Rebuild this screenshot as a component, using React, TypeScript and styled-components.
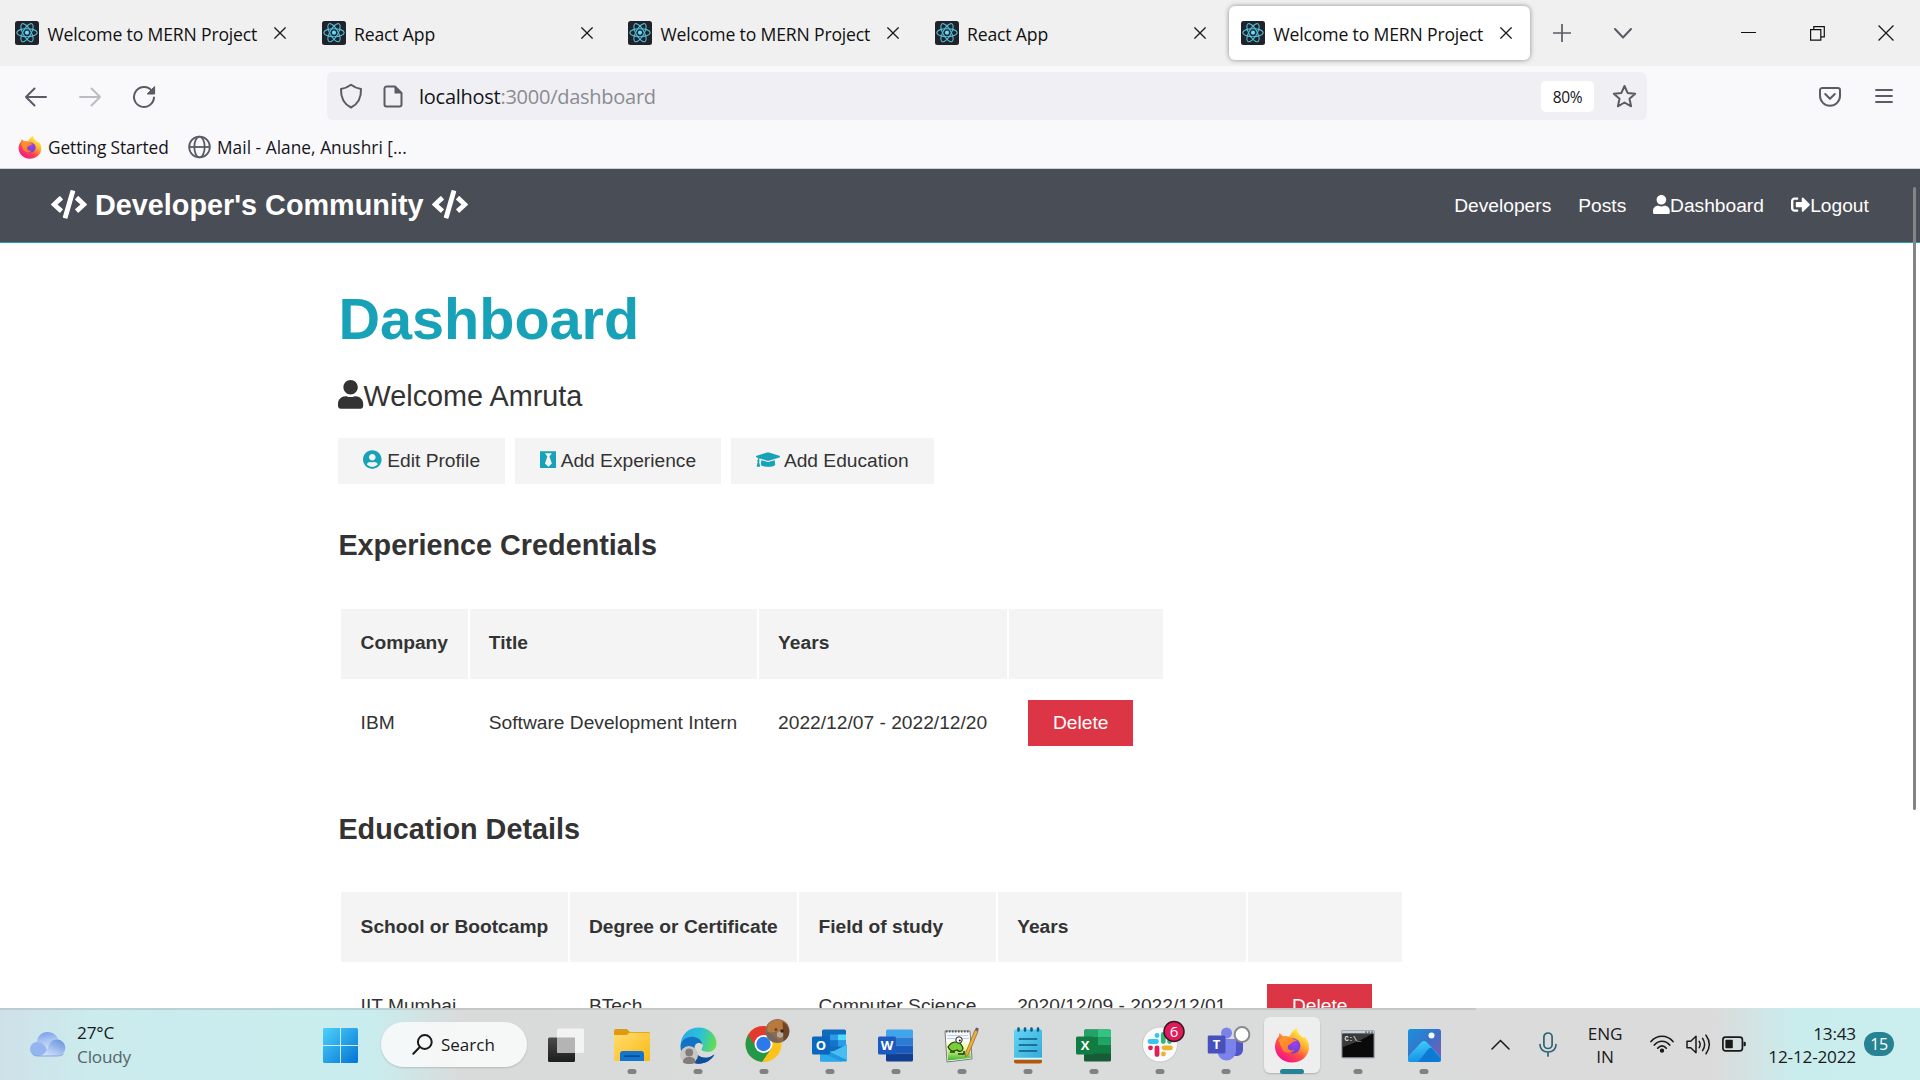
import React from "react";
import styled, { createGlobalStyle } from "styled-components";
import { FaBlackTie, FaCode, FaGraduationCap, FaSignOutAlt, FaUser, FaUserCircle } from "react-icons/fa";

const GlobalStyle = createGlobalStyle`
  html { font-size: 19.2px; }
  * { box-sizing: border-box; margin: 0; padding: 0; }
  body { background: #fff; overflow: hidden; }
`;

const uiFont = `"Open Sans", "Noto Sans", sans-serif`;

const Screen = styled.div`
  width: 1920px;
  height: 1080px;
  display: flex;
  flex-direction: column;
  overflow: hidden;
  background: #fff;
`;

/* ---------- Browser chrome ---------- */

const TabStrip = styled.div`
  height: 66px;
  flex: none;
  display: flex;
  align-items: center;
  padding-left: 3px;
  background: #f0f0f0;
`;

const Tab = styled.div<{ $active?: boolean }>`
  width: 301px;
  height: 54px;
  flex: none;
  display: flex;
  align-items: center;
  margin-right: 5.5px;
  padding: 0 18px 0 12px;
  border-radius: 6px;
  background: ${(p) => (p.$active ? "#fff" : "transparent")};
  box-shadow: ${(p) => (p.$active ? "0 0 5px rgba(0,0,0,0.42)" : "none")};
`;

const TabTitle = styled.span`
  flex: 1;
  margin-left: 8.5px;
  padding-top: 1px;
  font: 17.6px ${uiFont};
  letter-spacing: -0.16px;
  color: #111;
  white-space: nowrap;
`;

const StripButton = styled.span<{ $width: number; $push?: boolean }>`
  width: ${(p) => p.$width}px;
  height: 54px;
  flex: none;
  display: flex;
  align-items: center;
  justify-content: center;
  margin-left: ${(p) => (p.$push ? "auto" : 0)};
`;

const NavBar = styled.div`
  height: 61px;
  flex: none;
  display: flex;
  align-items: center;
  padding: 0 27px 0 9px;
  background: #f9f9fb;
`;

const NavButtons = styled.div`
  width: 318px;
  display: flex;
  align-items: center;
  padding-top: 1px;
`;

const NavButton = styled.span`
  width: 54px;
  display: flex;
  justify-content: center;
`;

const UrlBar = styled.div`
  width: 1320px;
  height: 48px;
  margin-top: -1px;
  display: flex;
  align-items: center;
  padding: 0 10px 0 12px;
  border-radius: 6px;
  background: #f0f0f4;
`;

const PageIcon = styled.span`
  display: flex;
  margin-left: 20px;
`;

const UrlText = styled.span`
  flex: 1;
  margin-left: 16px;
  padding-top: 1px;
  font: 20px ${uiFont};
  letter-spacing: -0.26px;
  color: #8b8b91;
  b { font-weight: 400; color: #15141a; }
`;

const ZoomPill = styled.span`
  width: 53px;
  height: 31px;
  margin-right: 18px;
  border-radius: 5px;
  background: #fff;
  font: 15.5px/32px ${uiFont};
  letter-spacing: -0.3px;
  text-align: center;
  color: #15141a;
`;

const NavEnd = styled.div`
  flex: 1;
  display: flex;
  justify-content: flex-end;
  align-items: center;
  gap: 34px;
`;

const Bookmarks = styled.div`
  height: 42px;
  flex: none;
  display: flex;
  align-items: center;
  padding: 0 0 1px 18px;
  border-bottom: 1px solid #cfd0d0;
  background: #f9f9fb;
`;

const Bookmark = styled.span<{ $width: number; $spacing: number }>`
  width: ${(p) => p.$width}px;
  display: flex;
  align-items: center;
  gap: 6px;
  font: 17.3px ${uiFont};
  letter-spacing: ${(p) => p.$spacing}px;
  color: #15141a;
  white-space: nowrap;
`;

/* ---------- Web page ---------- */

const Page = styled.main`
  position: relative;
  flex: 1;
  min-height: 0;
  overflow: hidden;
  font: 1rem/1.6 "Liberation Sans", Arial, sans-serif;
  color: #333;
`;

const SiteNav = styled.nav`
  height: 74px;
  display: flex;
  justify-content: space-between;
  align-items: center;
  padding: 0 51.2px 0 51px;
  border-bottom: 1px solid #17a2b8;
  background: #494d55;
  color: #fff;
`;

const Glyph = styled.span<{ $color?: string; $width: number }>`
  color: ${(p) => p.$color || "inherit"};
  svg { width: ${(p) => p.$width}em; height: 1em; vertical-align: -0.125em; }
`;

const Brand = styled.h1`
  font-size: 1.5rem;
  line-height: 1.6;
`;

const Links = styled.div`
  display: flex;
  gap: 27px;
  padding-top: 1px;
`;

const ScrollThumb = styled.div`
  position: absolute;
  top: 18px;
  right: 4px;
  width: 3px;
  height: 623px;
  border-radius: 2px;
  background: #858587;
`;

const Container = styled.section`
  width: 1320px;
  margin: 0 auto;
  padding: 42.2px 38.4px 0;
`;

const Title = styled.h1`
  font-size: 3rem;
  line-height: 1.2;
  margin-bottom: 18.4px;
  color: #17a2b8;
`;

const Lead = styled.p`
  font-size: 1.5rem;
  margin-bottom: 1rem;
`;

const ButtonRow = styled.div`
  display: flex;
`;

const Btn = styled.a<{ $danger?: boolean }>`
  display: inline-block;
  vertical-align: top;
  padding: 0.4rem 1.3rem;
  margin-right: 0.5rem;
  background: ${(p) => (p.$danger ? "#dc3545" : "#f4f4f4")};
  color: ${(p) => (p.$danger ? "#fff" : "#333")};
`;

const SubTitle = styled.h2`
  margin: 2rem 0;
  font-size: 1.5rem;
`;

const Table = styled.table`
  margin: 0.4px 0 0.6px 1px;
  border-collapse: separate;
  border-spacing: 2px;
  th, td { padding: 19.2px 19.6px 19.6px 19.2px; text-align: left; white-space: nowrap; }
  th { padding-top: 19.6px; background: #f4f4f4; }
`;

/* ---------- Taskbar ---------- */

const Taskbar = styled.footer`
  height: 72px;
  flex: none;
  display: flex;
  align-items: center;
  background:
    linear-gradient(rgba(150, 150, 150, 0.3), rgba(150, 150, 150, 0.3)) 0 0 / 1476px 2px no-repeat,
    linear-gradient(90deg, #cfe1e8 0, #cbebed 90px, #c9edee 370px, #d9dbdb 460px, #dbdbdb 1715px, #c9eced 1795px, #cbeeef 1920px);
`;

const Weather = styled.div`
  width: 306px;
  display: flex;
  align-items: center;
  gap: 10px;
  padding-left: 29px;
`;

const TwoLines = styled.div<{ $width?: number; $align?: string; $lead?: number }>`
  width: ${(p) => (p.$width ? `${p.$width}px` : "auto")};
  padding-top: 2px;
  font: 17.2px/${(p) => p.$lead || 24}px ${uiFont};
  letter-spacing: -0.2px;
  text-align: ${(p) => p.$align || "left"};
  color: #1a1a1a;
  white-space: nowrap;
`;

const Muted = styled.div`
  color: #56666a;
`;

const StartSlot = styled.div`
  width: 75px;
  display: flex;
  padding: 2px 0 0 17px;
`;

const SearchPill = styled.div`
  width: 146px;
  height: 45px;
  display: flex;
  align-items: center;
  gap: 8px;
  margin: 1px 6px 0 0;
  padding-left: 31px;
  border-radius: 23px;
  background: rgba(248, 250, 250, 0.9);
  box-shadow: 0 1px 2px rgba(0, 0, 0, 0.16);
  font: 17px ${uiFont};
  letter-spacing: 0;
  color: #1a1a1a;
`;

const AppSlot = styled.div`
  position: relative;
  width: 66px;
  height: 72px;
  display: flex;
  align-items: center;
  justify-content: center;
  padding-top: 2px;
`;

const ActiveTile = styled.div`
  position: absolute;
  inset: 9px 5px 7px;
  border-radius: 6px;
  background: #eeeeee;
  box-shadow: 0 1px 2px rgba(0, 0, 0, 0.2);
`;

const Art = styled.span<{ $shift?: string }>`
  position: relative;
  display: flex;
  transform: ${(p) => p.$shift || "none"};
`;

const RunningDot = styled.div<{ $active?: boolean }>`
  position: absolute;
  bottom: 6px;
  left: 50%;
  transform: translateX(-50%);
  width: ${(p) => (p.$active ? 24 : 9)}px;
  height: 5px;
  border-radius: 3px;
  background: ${(p) => (p.$active ? "#268393" : "#818181")};
`;

const Tray = styled.div`
  flex: 1;
  display: flex;
  align-items: center;
  padding-left: 34px;
`;

const TraySlot = styled.span<{ $width: number; $indent?: number }>`
  width: ${(p) => p.$width}px;
  display: flex;
  align-items: center;
  padding-left: ${(p) => p.$indent || 0}px;
`;

const CountBadge = styled.span`
  width: 30px;
  height: 24px;
  margin-left: 8px;
  border-radius: 12px;
  background: #268393;
  color: #fff;
  font: 16px/24px ${uiFont};
  letter-spacing: -0.3px;
  text-align: center;
`;

/* ---------- Drawings ---------- */

const ReactFavicon = () => (
  <svg width="24" height="24" viewBox="0 0 24 24">
    <rect width="24" height="24" rx="2.5" fill="#20232a" />
    <g fill="none" stroke="#53c1de" strokeWidth="1.1">
      <ellipse cx="12" cy="11.7" rx="10.2" ry="4" />
      <ellipse cx="12" cy="11.7" rx="10.2" ry="4" transform="rotate(60 12 11.7)" />
      <ellipse cx="12" cy="11.7" rx="10.2" ry="4" transform="rotate(120 12 11.7)" />
    </g>
    <circle cx="12" cy="11.7" r="2.1" fill="#61dafb" />
  </svg>
);

const Cross = ({ size, color = "#1b1b1b", weight = 1.3 }: { size: number; color?: string; weight?: number }) => (
  <svg width={size} height={size} viewBox="0 0 12 12" fill="none" stroke={color} strokeWidth={(weight * 12) / size}>
    <path d="M.4.4l11.2 11.2M11.6.4L.4 11.6" />
  </svg>
);

const Arrow = ({ flip, color }: { flip?: boolean; color: string }) => (
  <svg width="22" height="20" viewBox="0 0 22 20" fill="none" stroke={color} strokeWidth="2" strokeLinecap="round" strokeLinejoin="round">
    <path d={flip ? "M1 10h20M12.500 1.500L21 10l-8.500 8.500" : "M21 10H1M9.500 1.500L1 10l8.500 8.500"} />
  </svg>
);

const Reload = () => (
  <svg width="24" height="24" viewBox="0 0 24 24">
    <path d="M20.200 6.200A10 10 0 1 0 22 12.400" fill="none" stroke="#5b5b66" strokeWidth="2" strokeLinecap="round" />
    <path d="M22.600 1.600v7.400h-7.400z" fill="#5b5b66" stroke="#5b5b66" strokeLinejoin="round" />
  </svg>
);

const Shield = () => (
  <svg width="24" height="26" viewBox="0 0 24 26" fill="none" stroke="#5b5b66" strokeWidth="2" strokeLinejoin="round">
    <path d="M12 1.800c3 2.400 6.300 3.600 10 4.300C22.300 14.500 19 21 12 24.500 5 21 1.700 14.500 2 6.100 5.700 5.400 9 4.200 12 1.800z" />
  </svg>
);

const FileIcon = () => (
  <svg width="20" height="23" viewBox="0 0 20 23">
    <path d="M3.500 1.500H12l6.500 6.500v11.500a2 2 0 0 1-2 2h-13a2 2 0 0 1-2-2v-16a2 2 0 0 1 2-2z" fill="none" stroke="#5b5b66" strokeWidth="2" />
    <path d="M11.500 1.500v7h7z" fill="#5b5b66" />
  </svg>
);

const Star = () => (
  <svg width="25" height="25" viewBox="0 0 25 25" fill="none" stroke="#5b5b66" strokeWidth="2" strokeLinejoin="round">
    <path d="M12.500 2l3.100 6.900 7.600.8-5.700 5.100 1.600 7.500-6.600-3.800-6.600 3.800 1.600-7.500L1.800 9.700l7.600-.8z" />
  </svg>
);

const Pocket = () => (
  <svg width="22" height="20" viewBox="0 0 22 20" fill="none" stroke="#5b5b66" strokeWidth="2" strokeLinecap="round" strokeLinejoin="round">
    <path d="M3.200 1h15.600A2.200 2.200 0 0 1 21 3.200v5.600a10 10 0 0 1-20 0V3.200A2.200 2.200 0 0 1 3.200 1z" />
    <path d="M6.200 7l4.800 4.700L15.800 7" />
  </svg>
);

const Menu = () => (
  <svg width="18" height="18" viewBox="0 0 18 18" stroke="#5b5b66" strokeWidth="1.800" strokeLinecap="round">
    <path d="M1 2h16M1 8h16M1 14h16" />
  </svg>
);

const Globe = () => (
  <svg width="23" height="24" viewBox="0 0 24 24" fill="none" stroke="#5b5b66" strokeWidth="1.900">
    <circle cx="12" cy="12" r="10.800" />
    <ellipse cx="12" cy="12" rx="5.400" ry="10.800" />
    <path d="M1.200 12h21.600" />
  </svg>
);

const Firefox = ({ size, id }: { size: number; id: string }) => (
  <svg width={size} height={size} viewBox="0 0 36 36">
    <defs>
      <linearGradient id={`${id}a`} x1=".85" y1=".05" x2=".25" y2=".95">
        <stop offset=".1" stopColor="#fff04a" />
        <stop offset=".38" stopColor="#ffb02e" />
        <stop offset=".65" stopColor="#ff4f45" />
        <stop offset="1" stopColor="#f4128b" />
      </linearGradient>
      <radialGradient id={`${id}b`} cx=".6" cy=".35" r=".7">
        <stop offset="0" stopColor="#a63df0" />
        <stop offset="1" stopColor="#5b47cf" />
      </radialGradient>
      <linearGradient id={`${id}c`} x1="0" y1="0" x2="1" y2="1">
        <stop offset="0" stopColor="#ffa22a" />
        <stop offset="1" stopColor="#ff6634" />
      </linearGradient>
    </defs>
    <path
      d="M23.500.500c-1 3.400.3 5.400 3.200 8.200 1.200.7 2.500 1.500 3.300 2.600l.6-1.600c3.300 3.300 4.600 7.100 4.400 11.300C34.500 29.500 27 35.500 18 35.500S1 28.700 1 19.700c0-4 1.500-7.700 3.800-10.200L5.500 6l3.700 3.300c2-.5 4.200-.3 6.100.5 1.500-3.900 4.500-7.300 8.200-9.300z"
      fill={`url(#${id}a)`}
    />
    <circle cx="18.800" cy="18.800" r="7.600" fill={`url(#${id}b)`} />
    <path
      d="M4.500 13.500c2.300-3 5.200-4.200 8.700-3.800 2.500.2 4.700 1.200 6 2.600l4 .7c-1.800 1.500-4.700 1.600-6 3.300-1.700 1.500-3.500 1.600-3.400 4 .3 3 3.800 4.100 6.900 2.500-2.500 4-8.600 4-11.300 1C6.600 20.500 7 17 4.500 13.500z"
      fill={`url(#${id}c)`}
    />
  </svg>
);

const Cloud = () => (
  <svg width="38" height="26" viewBox="0 0 38 26">
    <defs>
      <linearGradient id="cloud" x1="0" y1="0" x2=".2" y2="1">
        <stop offset="0" stopColor="#6f9bea" />
        <stop offset=".5" stopColor="#a9c3f2" />
        <stop offset="1" stopColor="#d3e1fa" />
      </linearGradient>
      <linearGradient id="cloudFront" x1="1" y1="0" x2=".2" y2="1">
        <stop offset="0" stopColor="#5f8ddd" />
        <stop offset="1" stopColor="#dbe6fb" />
      </linearGradient>
    </defs>
    <path d="M8 12C8 5 12.500 1 18.500 1S29 5 29.500 10v10H8z" fill="url(#cloud)" />
    <path d="M8 11c5 0 8 3 10 8l-4 6H8a7 7 0 0 1 0-14z" fill="#95b5ee" />
    <path d="M28 8.500a8.300 8.300 0 0 1 0 16.600H10c4-1 7-3 9-8.100 1-5 4-8.500 9-8.500z" fill="url(#cloudFront)" />
    <path d="M3.500 23c2 1.800 4 2 6 2h18c3 0 5-.5 7-2" fill="none" stroke="#7ea5e8" strokeWidth="1" />
  </svg>
);

const WindowsLogo = () => (
  <svg width="35" height="35" viewBox="0 0 35 35">
    <defs>
      <linearGradient id="win" x1="0" y1="0" x2="1" y2="1">
        <stop offset="0" stopColor="#4ed2fb" />
        <stop offset="1" stopColor="#0273d4" />
      </linearGradient>
    </defs>
    <path d="M1.500 0h15.500v17H0V1.500Q0 0 1.500 0zM18 0h15.500Q35 0 35 1.500V17H18zM0 18h17v17H1.500Q0 35 0 33.500zM18 18h17v15.500q0 1.500-1.500 1.500H18z" fill="url(#win)" />
  </svg>
);

const Magnifier = () => (
  <svg width="21" height="21" viewBox="0 0 21 21" fill="none" stroke="#1a1a1a" strokeWidth="2" strokeLinecap="round">
    <circle cx="12.800" cy="8" r="6.900" />
    <path d="M7.800 13L1.300 19.700" />
  </svg>
);

const TaskView = () => (
  <svg width="36" height="36" viewBox="0 0 36 36">
    <defs>
      <linearGradient id="tv" x1="0" y1="0" x2="0" y2="1">
        <stop offset="0" stopColor="#4b4b4b" />
        <stop offset="1" stopColor="#1c1c1c" />
      </linearGradient>
    </defs>
    <rect y="10.500" width="27" height="24.500" rx="1.500" fill="url(#tv)" />
    <rect x="9" y="1.500" width="27" height="24.500" rx="1.500" fill="#f4f4f4" opacity=".95" />
    <path d="M9 10.500h18V26H10.500L9 24.500z" fill="#b4b4b4" />
  </svg>
);

const Folder = () => (
  <svg width="36" height="34" viewBox="0 0 36 34">
    <defs>
      <linearGradient id="fold" x1="0" y1="0" x2="1" y2="1">
        <stop offset="0" stopColor="#ffdd70" />
        <stop offset="1" stopColor="#f9b914" />
      </linearGradient>
    </defs>
    <path d="M0 3a2 2 0 0 1 2-2h9.500c1 0 2 .500 2.700 1.200L16 4h18.500A1.500 1.500 0 0 1 36 5.500V12H0z" fill="#de9a10" />
    <path d="M0 7h12c1.500 0 2.500-2.300 4-2.300h18.500A1.500 1.500 0 0 1 36 6.200v25.300a1.500 1.500 0 0 1-1.500 1.500h-33A1.500 1.500 0 0 1 0 31.500z" fill="url(#fold)" />
    <path d="M6 33v-7a3 3 0 0 1 3-3h18a3 3 0 0 1 3 3v7z" fill="#1275d0" />
    <path d="M11 28.200h14" stroke="#0c4a93" strokeWidth="1.700" strokeLinecap="round" />
  </svg>
);

const Edge = () => (
  <svg width="37" height="37" viewBox="0 0 37 37">
    <defs>
      <linearGradient id="edgeTop" x1="0" y1=".3" x2="1" y2=".5">
        <stop offset="0" stopColor="#2aa9ea" />
        <stop offset=".55" stopColor="#2cc2d4" />
        <stop offset="1" stopColor="#63de4d" />
      </linearGradient>
    </defs>
    <path d="M.700 17C1.500 7 9 .500 18.500.500 29 .500 36.500 8 36.500 16.500c0 5-3.600 8.300-8.500 8.300-4 0-6.500-1-6.500-2.500 0-1 1.300-1.700 1.300-3.800C22.800 14 18 10 12 10 6.500 10 2.500 13 .700 17z" fill="url(#edgeTop)" />
    <path d="M.500 18.500C1 12.500 7 9.500 12.500 9.700c5.500.2 9.500 3.500 10 7.800-3.500-3-8-1.500-8 3.500 0 7 7 11 13.500 9.500 2.800-.6 4.500-2 6.500-3C31.500 33 25.500 36.700 18.500 36.700 8 36.700 0 28.500.500 18.500z" fill="#1273c4" />
    <path d="M14.500 22c1 6.500 7.500 9.500 13.500 8.500 2.700-.5 4.500-2 6.500-3-3 5.500-9 9.200-16 9.200-4 0-6-2-7-4.500z" fill="#134e9b" />
    <circle cx="9" cy="28" r="9" fill="#c9c6c4" />
    <circle cx="9.200" cy="25.500" r="3.900" fill="#817d7a" />
    <path d="M3 35.500c0-4 2.400-5.500 6.200-5.500s6.200 1.500 6.200 5.500c-3 2-9 2-12.400 0z" fill="#817d7a" />
  </svg>
);

const Chrome = () => (
  <svg width="46" height="44" viewBox="0 0 46 44">
    <g transform="translate(1 7)">
      <circle cx="18" cy="18" r="18" fill="#fdc31b" />
      <path d="M18 18L2.400 9A18 18 0 0 0 16.500 36L25.800 22.500z" fill="#23974a" />
      <path d="M2.400 9A18 18 0 0 1 33.600 9H18L10 20.500z" fill="#e13b2e" />
      <circle cx="18" cy="18" r="9" fill="#fff" />
      <circle cx="18" cy="18" r="7.200" fill="#2b79ea" />
    </g>
    <circle cx="33" cy="12" r="12" fill="#8a6a50" />
    <path d="M23 7c3-8 16-8 18-2l-3 6-8 2-7 1z" fill="#b8793f" />
    <path d="M21.300 13c5-1 7 4 13 9-6 3-12-1-13-9z" fill="#75665b" />
    <path d="M38 2.500c5 3 7.500 8 6.500 12-1 4-3 6-5.500 7.500z" fill="#6e4427" />
    <circle cx="35.500" cy="15.500" r="3.200" fill="#b9a99c" />
    <circle cx="31.500" cy="10.500" r="1.500" fill="#6b4326" />
    <circle cx="37.500" cy="12" r="1.700" fill="#3a251a" />
  </svg>
);

const BadgeLetter = ({ x, y, color, letter }: { x: number; y: number; color: string; letter: string }) => (
  <g>
    <rect x={x} y={y} width="18" height="18" rx="1.500" fill={color} />
    <text x={x + 9} y={y + 13.600} fill="#fff" textAnchor="middle" fontFamily='"Open Sans", sans-serif' fontWeight="700" fontSize="13">
      {letter}
    </text>
  </g>
);

const Outlook = () => (
  <svg width="36" height="33" viewBox="0 0 36 33">
    <rect x="10" y=".500" width="24" height="22" rx="1.500" fill="#0f6cbd" />
    <path d="M18 5.500h8v6h-8z" fill="#2f9be8" />
    <path d="M26 5.500h8v6h-8z" fill="#50d9ff" />
    <path d="M18 11.500h8v6h-8z" fill="#1575c9" />
    <path d="M26 11.500h8v6h-8z" fill="#2b9ce9" />
    <path d="M8 15l14 9 13-8.500V31a1.500 1.500 0 0 1-1.500 1.500h-24A1.500 1.500 0 0 1 8 31z" fill="#2197e0" />
    <path d="M35 15.500V31L19 23.500z" fill="#49bdf3" />
    <path d="M8 23l22 9.500H9.500A1.500 1.500 0 0 1 8 31z" fill="#2aa9ec" />
    <BadgeLetter x={0} y={7.500} color="#0b66be" letter="O" />
  </svg>
);

const Word = () => (
  <svg width="36" height="33" viewBox="0 0 36 33">
    <path d="M9.500.500h24A1.500 1.500 0 0 1 35 2v6.500H8V2A1.500 1.500 0 0 1 9.500.500z" fill="#41a5ee" />
    <path d="M8 8.500h27v8H8z" fill="#2b7cd3" />
    <path d="M8 16.500h27v8H8z" fill="#185abd" />
    <path d="M8 24.500h27V31a1.500 1.500 0 0 1-1.500 1.500h-24A1.500 1.500 0 0 1 8 31z" fill="#103f91" />
    <BadgeLetter x={0} y={7.500} color="#1c5abf" letter="W" />
  </svg>
);

const Excel = () => (
  <svg width="36" height="33" viewBox="0 0 36 33">
    <rect x="8" y=".500" width="27" height="32" rx="1.500" fill="#185c37" />
    <path d="M9.500.500H22v8H8V2A1.500 1.500 0 0 1 9.500.500z" fill="#21a366" />
    <path d="M22 .500h11.500A1.500 1.500 0 0 1 35 2v6.500H22z" fill="#33c481" />
    <path d="M8 8.500h14v16H8z" fill="#107c41" />
    <path d="M22 8.500h13v8H22z" fill="#21a366" />
    <path d="M22 16.500h13v8H22z" fill="#107c41" />
    <BadgeLetter x={0} y={7.500} color="#107c41" letter="X" />
  </svg>
);

const NotepadPlus = () => (
  <svg width="36" height="36" viewBox="0 0 36 36">
    <defs>
      <linearGradient id="npp" x1="0" y1="0" x2="0" y2="1">
        <stop offset="0" stopColor="#fff" />
        <stop offset=".4" stopColor="#f2fa9a" />
        <stop offset="1" stopColor="#3cb42a" />
      </linearGradient>
    </defs>
    <path d="M1 4h25l2 28-25 3z" fill="#f7f7f7" stroke="#7c7c7c" strokeWidth="1" />
    <path d="M2.500 13h23l1.300 18L4 33.500z" fill="url(#npp)" />
    <path d="M3 8.500h21M3 11.500h22" stroke="#b5d3ea" strokeWidth="1" />
    <path d="M2 4.500h23" stroke="#555" strokeWidth="2" strokeDasharray="1.500 1.500" />
    <path d="M4 20c4-7 12-6 14-1 3 4-2 7-5 4-4 2-7 1-9-3z" fill="#79cf33" stroke="#1f3d13" strokeWidth="1.200" />
    <circle cx="15" cy="13" r="3.200" fill="#fff" stroke="#222" />
    <circle cx="15.800" cy="13.500" r="1" fill="#111" />
    <path d="M6 25h5m3 2h6v-3" stroke="#16400f" strokeWidth="1.500" fill="none" />
    <path d="M31 3l3 1.300L24.500 27l-3 3 .3-4.500z" fill="#eeb13c" stroke="#8c5a22" strokeWidth=".7" />
    <path d="M31 3l1-2.500 2.800 1L34 4.300z" fill="#5b6070" />
  </svg>
);

const Notepad = () => (
  <svg width="28" height="37" viewBox="0 0 28 37">
    <defs>
      <linearGradient id="note" x1="0" y1="0" x2="1" y2="1">
        <stop offset="0" stopColor="#62d5f5" />
        <stop offset="1" stopColor="#35a9d6" />
      </linearGradient>
    </defs>
    <path d="M0 33h28v1.500a2 2 0 0 1-2 2H2a2 2 0 0 1-2-2z" fill="#b6560d" />
    <rect y="2.500" width="28" height="30" rx="1.500" fill="url(#note)" />
    <path d="M0 31.500h28" stroke="#e6f6fb" strokeWidth="1.500" />
    <path d="M4.500 1.500v2M11 1.500v2M17.500 1.500v2M24 1.500v2" stroke="#0b5c86" strokeWidth="2.600" strokeLinecap="round" />
    <path d="M5.500 12h17M5.500 18h17M5.500 24h17" stroke="#0a5a84" strokeWidth="1.700" strokeLinecap="round" />
  </svg>
);

const Slack = () => (
  <svg width="44" height="44" viewBox="0 0 44 44">
    <circle cx="18.500" cy="25.500" r="17.500" fill="#fbfbfb" stroke="#c0c0c0" strokeWidth=".8" />
    <g strokeWidth="4.800" strokeLinecap="round">
      <path d="M8.500 22.500h6.500M15.500 16.500v0" stroke="#36c5f0" />
      <path d="M21.800 15.500v7M28 22.500v0" stroke="#2eb67d" />
      <path d="M22.500 28.800h6.500M22 35v0" stroke="#ecb22e" />
      <path d="M15.500 29v6.500M9 28.800v0" stroke="#e01e5a" />
    </g>
    <circle cx="32.500" cy="12.500" r="10" fill="#df1b59" stroke="#3d1426" strokeWidth="1.500" />
    <text x="32.500" y="17.900" textAnchor="middle" fill="#fff" fontFamily='"Open Sans", sans-serif' fontSize="15">
      6
    </text>
  </svg>
);

const Teams = () => (
  <svg width="44" height="37" viewBox="0 0 44 37">
    <path d="M26 13h9.500v10.500c0 4-3 6.500-6.500 6.500h-3z" fill="#4f57c5" />
    <circle cx="19" cy="7" r="5.500" fill="#7b83eb" />
    <path d="M10 13h17.500a1 1 0 0 1 1 1v10.500A9.500 9.500 0 0 1 19 34.500c-5 0-9-4-9-10z" fill="#7b83eb" />
    <BadgeLetter x={0} y={9.500} color="#4850bb" letter="T" />
    <circle cx="34.500" cy="8.500" r="7.400" fill="#fff" stroke="#8a8a8a" strokeWidth="2" />
  </svg>
);

const Terminal = () => (
  <svg width="34" height="29" viewBox="0 0 34 29">
    <rect x=".700" y=".700" width="32.600" height="27.200" rx="1" fill="#0a0a0a" stroke="#a3abb5" strokeWidth="1.400" />
    <path d="M1 1h32v2.500H1z" fill="#c9d2dc" />
    <path d="M24 2.200h8" stroke="#5b6673" strokeWidth="1.200" strokeDasharray="2 1" />
    <path d="M2 4h29L18 11 2 17z" fill="#3a3a3a" />
    <text x="3.500" y="10.700" fill="#e8e8e8" fontFamily='"Liberation Mono", monospace' fontSize="7" fontWeight="700">
      C:\_
    </text>
  </svg>
);

const Photos = () => (
  <svg width="33" height="33" viewBox="0 0 33 33">
    <defs>
      <linearGradient id="pho" x1="0" y1="0" x2="1" y2="1">
        <stop offset="0" stopColor="#1593e0" />
        <stop offset=".5" stopColor="#3c70c6" />
        <stop offset="1" stopColor="#8c57b8" />
      </linearGradient>
      <linearGradient id="hill" x1="0" y1="0" x2=".3" y2="1">
        <stop offset="0" stopColor="#42d6fb" />
        <stop offset="1" stopColor="#168ee5" />
      </linearGradient>
    </defs>
    <rect width="33" height="33" rx="2.500" fill="url(#pho)" />
    <path d="M0 27.500L13.500 13c1.500-1.500 3.500-1.500 5 0L33 28v2.500a2.500 2.500 0 0 1-2.500 2.500h-28A2.500 2.500 0 0 1 0 30.500z" fill="url(#hill)" />
    <path d="M10 33L20.500 20c1.300-1.500 3-1.500 4.300 0L32.500 30c-.5 2-1 3-3 3z" fill="#0d79d2" />
    <circle cx="23.500" cy="6.500" r="3" fill="#f4fbff" />
  </svg>
);

const Mic = () => (
  <svg width="18" height="25" viewBox="0 0 18 25" fill="none" stroke="#2a6474" strokeWidth="1.700" strokeLinecap="round">
    <rect x="4.900" y="1" width="8.200" height="15.500" rx="4.100" />
    <path d="M1 12.500c0 4.800 3.500 7.500 8 7.500s8-2.700 8-7.500M9 20v4" />
  </svg>
);

const Wifi = () => (
  <svg width="24" height="18" viewBox="0 0 24 18" fill="none" stroke="#1a1a1a" strokeWidth="1.700" strokeLinecap="round">
    <path d="M1 6.500c6-7 16-7 22 0M4.300 10c4.500-5 11-5 15.400 0M7.700 13.200c2.600-3 6-3 8.600 0" />
    <circle cx="12" cy="15.700" r="1.300" fill="#1a1a1a" />
  </svg>
);

const Speaker = () => (
  <svg width="25" height="21" viewBox="0 0 25 21" fill="none" stroke="#1a1a1a" strokeWidth="1.500" strokeLinecap="round" strokeLinejoin="round">
    <path d="M1 7.200h3.700L10 2.300v16.400l-5.300-4.900H1z" />
    <path d="M13.200 7.300c1.200 2 1.200 4.400 0 6.400M16.600 4.300c2.600 4 2.600 8.400 0 12.400M20 1.200c4.300 6 4.300 12.600 0 18.600" />
  </svg>
);

const Battery = () => (
  <svg width="25" height="16" viewBox="0 0 25 16">
    <rect x=".900" y="1.200" width="19.500" height="13.600" rx="2.600" fill="none" stroke="#1a1a1a" strokeWidth="1.700" />
    <rect x="3.400" y="3.800" width="7.400" height="8.400" rx=".8" fill="#1a1a1a" />
    <path d="M21.500 5.800h1a1.300 1.300 0 0 1 1.300 1.300v1.800a1.300 1.300 0 0 1-1.300 1.300h-1z" fill="#1a1a1a" />
  </svg>
);

/* ---------- Data ---------- */

const tabs = ["Welcome to MERN Project", "React App", "Welcome to MERN Project", "React App", "Welcome to MERN Project"];

const experience = {
  head: ["Company", "Title", "Years", ""],
  row: ["IBM", "Software Development Intern", "2022/12/07 - 2022/12/20"],
};

const education = {
  head: ["School or Bootcamp", "Degree or Certificate", "Field of study", "Years", ""],
  row: ["IIT Mumbai", "BTech", "Computer Science", "2020/12/09 - 2022/12/01"],
};

const apps: { name: string; art: React.ReactNode; idle?: boolean; active?: boolean; shift?: string }[] = [
  { name: "taskview", art: <TaskView />, idle: true },
  { name: "explorer", art: <Folder /> },
  { name: "edge", art: <Edge /> },
  { name: "chrome", art: <Chrome />, shift: "translate(3.5px, -4px)" },
  { name: "outlook", art: <Outlook /> },
  { name: "word", art: <Word /> },
  { name: "notepadplus", art: <NotepadPlus /> },
  { name: "notepad", art: <Notepad /> },
  { name: "excel", art: <Excel /> },
  { name: "slack", art: <Slack />, shift: "translate(3.5px, -4px)" },
  { name: "teams", art: <Teams />, shift: "translate(3.5px, -1px)" },
  { name: "firefox", art: <Firefox size={36} id="ffbar" />, active: true },
  { name: "terminal", art: <Terminal />, shift: "translate(0, -1px)" },
  { name: "photos", art: <Photos /> },
];

const Credentials = ({ title, head, row }: { title: string; head: string[]; row: string[] }) => (
  <>
    <SubTitle>{title}</SubTitle>
    <Table>
      <thead>
        <tr>
          {head.map((h, i) => (
            <th key={i}>{h}</th>
          ))}
        </tr>
      </thead>
      <tbody>
        <tr>
          {row.map((c) => (
            <td key={c}>{c}</td>
          ))}
          <td>
            <Btn $danger>Delete</Btn>
          </td>
        </tr>
      </tbody>
    </Table>
  </>
);

export default function App() {
  return (
    <Screen>
      <GlobalStyle />
      <TabStrip>
        {tabs.map((t, i) => (
          <Tab key={i} $active={i === 4}>
            <ReactFavicon />
            <TabTitle>{t}</TabTitle>
            <Cross size={12} />
          </Tab>
        ))}
        <StripButton $width={53}>
          <svg width="18" height="18" viewBox="0 0 18 18" stroke="#5b5b66" strokeWidth="1.700">
            <path d="M9 0v18M0 9h18" />
          </svg>
        </StripButton>
        <StripButton $width={68}>
          <svg width="18" height="11" viewBox="0 0 18 11" fill="none" stroke="#5b5b66" strokeWidth="2" strokeLinecap="round" strokeLinejoin="round">
            <path d="M1 1l8 8.500L17 1" />
          </svg>
        </StripButton>
        <StripButton $width={69} $push>
          <svg width="15" height="2" viewBox="0 0 15 2">
            <path d="M0 .500h15" stroke="#111" />
          </svg>
        </StripButton>
        <StripButton $width={69}>
          <svg width="15" height="15" viewBox="0 0 15 15" fill="none" stroke="#111" strokeWidth="1.200">
            <path d="M.600 3.600h10.200v10.500H.600zM3.800 3.500V.700h10.500v10.200h-3.400" />
          </svg>
        </StripButton>
        <StripButton $width={68}>
          <Cross size={16} weight={1.3} />
        </StripButton>
      </TabStrip>

      <NavBar>
        <NavButtons>
          <NavButton><Arrow color="#5b5b66" /></NavButton>
          <NavButton><Arrow flip color="#bcbcc1" /></NavButton>
          <NavButton><Reload /></NavButton>
        </NavButtons>
        <UrlBar>
          <Shield />
          <PageIcon><FileIcon /></PageIcon>
          <UrlText>
            <b>localhost</b>:3000/dashboard
          </UrlText>
          <ZoomPill>80%</ZoomPill>
          <Star />
        </UrlBar>
        <NavEnd>
          <Pocket />
          <Menu />
        </NavEnd>
      </NavBar>

      <Bookmarks>
        <Bookmark $width={170} $spacing={-0.1}>
          <Firefox size={24} id="ffmark" />
          Getting Started
        </Bookmark>
        <Bookmark $width={240} $spacing={0.04}>
          <Globe />
          Mail - Alane, Anushri [...
        </Bookmark>
      </Bookmarks>

      <Page>
        <SiteNav>
          <Brand>
            <Glyph $width={1.25}><FaCode /></Glyph> Developer's Community <Glyph $width={1.25}><FaCode /></Glyph>
          </Brand>
          <Links>
            <span>Developers</span>
            <span>Posts</span>
            <span><Glyph $width={0.875}><FaUser /></Glyph>Dashboard</span>
            <span><Glyph $width={1}><FaSignOutAlt /></Glyph>Logout</span>
          </Links>
        </SiteNav>
        <Container>
          <Title>Dashboard</Title>
          <Lead><Glyph $width={0.875}><FaUser /></Glyph>Welcome Amruta</Lead>
          <ButtonRow>
            <Btn><Glyph $color="#17a2b8" $width={0.969}><FaUserCircle /></Glyph> Edit Profile</Btn>
            <Btn><Glyph $color="#17a2b8" $width={0.875}><FaBlackTie /></Glyph> Add Experience</Btn>
            <Btn><Glyph $color="#17a2b8" $width={1.25}><FaGraduationCap /></Glyph> Add Education</Btn>
          </ButtonRow>
          <Credentials title="Experience Credentials" {...experience} />
          <Credentials title="Education Details" {...education} />
        </Container>
        <ScrollThumb />
      </Page>

      <Taskbar>
        <Weather>
          <Cloud />
          <TwoLines>
            <div>27°C</div>
            <Muted>Cloudy</Muted>
          </TwoLines>
        </Weather>
        <StartSlot><WindowsLogo /></StartSlot>
        <SearchPill>
          <Magnifier />
          Search
        </SearchPill>
        {apps.map((a) => (
          <AppSlot key={a.name}>
            {a.active && <ActiveTile />}
            <Art $shift={a.shift}>{a.art}</Art>
            {!a.idle && <RunningDot $active={a.active} />}
          </AppSlot>
        ))}
        <Tray>
          <TraySlot $width={48}>
            <svg width="19" height="11" viewBox="0 0 19 11" fill="none" stroke="#1a1a1a" strokeWidth="1.500" strokeLinecap="round">
              <path d="M1 10l8.500-8.500L18 10" />
            </svg>
          </TraySlot>
          <TraySlot $width={46}><Mic /></TraySlot>
          <TwoLines $width={40} $align="center" $lead={23}>
            <div>ENG</div>
            <div>IN</div>
          </TwoLines>
          <TraySlot $width={61} $indent={25}><Wifi /></TraySlot>
          <TraySlot $width={36}><Speaker /></TraySlot>
          <TraySlot $width={25}><Battery /></TraySlot>
          <TwoLines $width={109} $align="right" $lead={23}>
            <div>13:43</div>
            <div>12-12-2022</div>
          </TwoLines>
          <CountBadge>15</CountBadge>
        </Tray>
      </Taskbar>
    </Screen>
  );
}
